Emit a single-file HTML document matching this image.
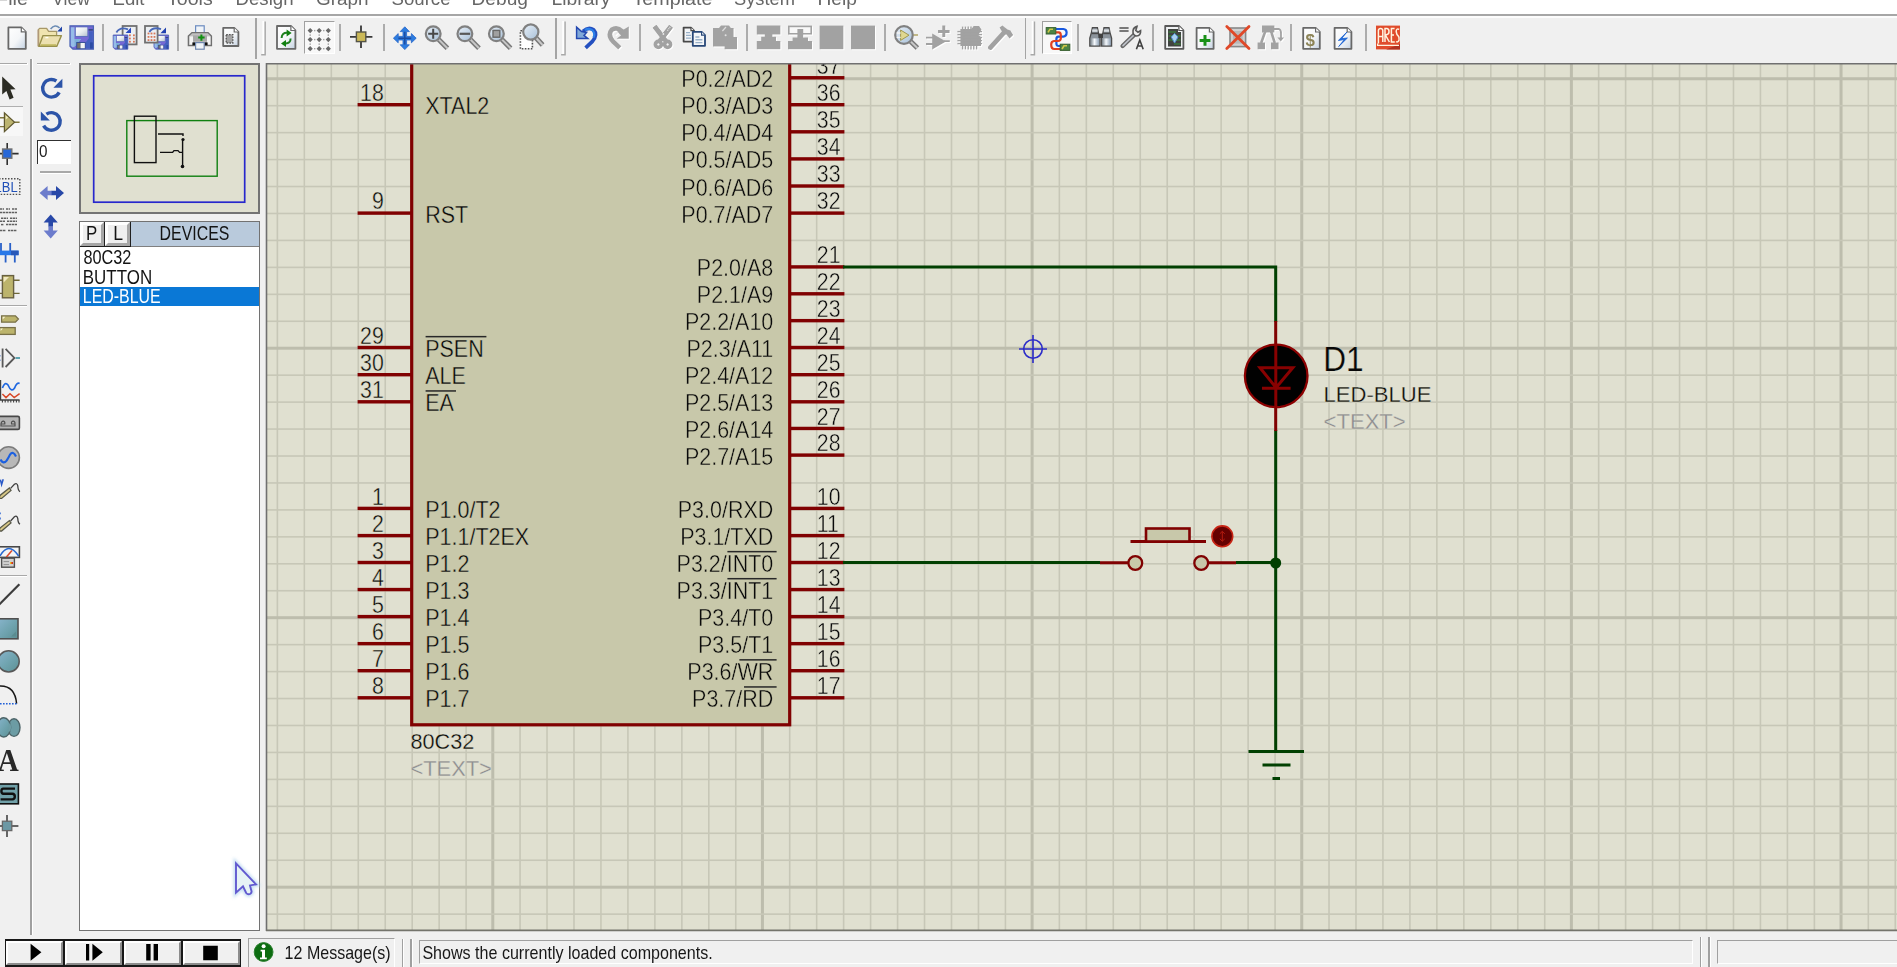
<!DOCTYPE html>
<html><head><meta charset="utf-8"><title>ISIS</title>
<style>
html,body{margin:0;padding:0;}
body{width:1897px;height:967px;overflow:hidden;background:#f0f0f0;position:relative;font-family:"Liberation Sans",sans-serif;}
.abs{position:absolute;}
</style></head><body>
<svg class="abs" style="left:0;top:0;opacity:0.999" width="1897" height="967" viewBox="0 0 1897 967" font-family="Liberation Sans, sans-serif"><defs><clipPath id="cc"><rect x="267" y="64" width="1630" height="866"/></clipPath></defs><rect x="267" y="64" width="1630" height="866" fill="#e0e0d0"/><g clip-path="url(#cc)"><g><rect x="276.57" y="64" width="1.6" height="866" fill="#c7c7b7"/><rect x="303.53" y="64" width="1.6" height="866" fill="#c7c7b7"/><rect x="330.50" y="64" width="1.6" height="866" fill="#c7c7b7"/><rect x="357.46" y="64" width="1.6" height="866" fill="#c7c7b7"/><rect x="384.43" y="64" width="1.6" height="866" fill="#c7c7b7"/><rect x="411.39" y="64" width="1.6" height="866" fill="#c7c7b7"/><rect x="438.36" y="64" width="1.6" height="866" fill="#c7c7b7"/><rect x="465.32" y="64" width="1.6" height="866" fill="#c7c7b7"/><rect x="491.29" y="64" width="3" height="866" fill="#bdbdad"/><rect x="519.26" y="64" width="1.6" height="866" fill="#c7c7b7"/><rect x="546.22" y="64" width="1.6" height="866" fill="#c7c7b7"/><rect x="573.19" y="64" width="1.6" height="866" fill="#c7c7b7"/><rect x="600.15" y="64" width="1.6" height="866" fill="#c7c7b7"/><rect x="627.11" y="64" width="1.6" height="866" fill="#c7c7b7"/><rect x="654.08" y="64" width="1.6" height="866" fill="#c7c7b7"/><rect x="681.05" y="64" width="1.6" height="866" fill="#c7c7b7"/><rect x="708.01" y="64" width="1.6" height="866" fill="#c7c7b7"/><rect x="734.97" y="64" width="1.6" height="866" fill="#c7c7b7"/><rect x="760.94" y="64" width="3" height="866" fill="#bdbdad"/><rect x="788.91" y="64" width="1.6" height="866" fill="#c7c7b7"/><rect x="815.87" y="64" width="1.6" height="866" fill="#c7c7b7"/><rect x="842.83" y="64" width="1.6" height="866" fill="#c7c7b7"/><rect x="869.80" y="64" width="1.6" height="866" fill="#c7c7b7"/><rect x="896.77" y="64" width="1.6" height="866" fill="#c7c7b7"/><rect x="923.73" y="64" width="1.6" height="866" fill="#c7c7b7"/><rect x="950.70" y="64" width="1.6" height="866" fill="#c7c7b7"/><rect x="977.66" y="64" width="1.6" height="866" fill="#c7c7b7"/><rect x="1004.62" y="64" width="1.6" height="866" fill="#c7c7b7"/><rect x="1030.59" y="64" width="3" height="866" fill="#bdbdad"/><rect x="1058.56" y="64" width="1.6" height="866" fill="#c7c7b7"/><rect x="1085.52" y="64" width="1.6" height="866" fill="#c7c7b7"/><rect x="1112.48" y="64" width="1.6" height="866" fill="#c7c7b7"/><rect x="1139.45" y="64" width="1.6" height="866" fill="#c7c7b7"/><rect x="1166.42" y="64" width="1.6" height="866" fill="#c7c7b7"/><rect x="1193.38" y="64" width="1.6" height="866" fill="#c7c7b7"/><rect x="1220.34" y="64" width="1.6" height="866" fill="#c7c7b7"/><rect x="1247.31" y="64" width="1.6" height="866" fill="#c7c7b7"/><rect x="1274.28" y="64" width="1.6" height="866" fill="#c7c7b7"/><rect x="1300.24" y="64" width="3" height="866" fill="#bdbdad"/><rect x="1328.21" y="64" width="1.6" height="866" fill="#c7c7b7"/><rect x="1355.17" y="64" width="1.6" height="866" fill="#c7c7b7"/><rect x="1382.13" y="64" width="1.6" height="866" fill="#c7c7b7"/><rect x="1409.10" y="64" width="1.6" height="866" fill="#c7c7b7"/><rect x="1436.06" y="64" width="1.6" height="866" fill="#c7c7b7"/><rect x="1463.03" y="64" width="1.6" height="866" fill="#c7c7b7"/><rect x="1490.00" y="64" width="1.6" height="866" fill="#c7c7b7"/><rect x="1516.96" y="64" width="1.6" height="866" fill="#c7c7b7"/><rect x="1543.92" y="64" width="1.6" height="866" fill="#c7c7b7"/><rect x="1569.89" y="64" width="3" height="866" fill="#bdbdad"/><rect x="1597.86" y="64" width="1.6" height="866" fill="#c7c7b7"/><rect x="1624.82" y="64" width="1.6" height="866" fill="#c7c7b7"/><rect x="1651.79" y="64" width="1.6" height="866" fill="#c7c7b7"/><rect x="1678.75" y="64" width="1.6" height="866" fill="#c7c7b7"/><rect x="1705.71" y="64" width="1.6" height="866" fill="#c7c7b7"/><rect x="1732.68" y="64" width="1.6" height="866" fill="#c7c7b7"/><rect x="1759.65" y="64" width="1.6" height="866" fill="#c7c7b7"/><rect x="1786.61" y="64" width="1.6" height="866" fill="#c7c7b7"/><rect x="1813.58" y="64" width="1.6" height="866" fill="#c7c7b7"/><rect x="1839.54" y="64" width="3" height="866" fill="#bdbdad"/><rect x="1867.50" y="64" width="1.6" height="866" fill="#c7c7b7"/><rect x="1894.47" y="64" width="1.6" height="866" fill="#c7c7b7"/><rect x="267" y="77.24" width="1630" height="3" fill="#bdbdad"/><rect x="267" y="104.89" width="1630" height="1.6" fill="#c7c7b7"/><rect x="267" y="131.84" width="1630" height="1.6" fill="#c7c7b7"/><rect x="267" y="158.78" width="1630" height="1.6" fill="#c7c7b7"/><rect x="267" y="185.73" width="1630" height="1.6" fill="#c7c7b7"/><rect x="267" y="212.68" width="1630" height="1.6" fill="#c7c7b7"/><rect x="267" y="239.63" width="1630" height="1.6" fill="#c7c7b7"/><rect x="267" y="266.58" width="1630" height="1.6" fill="#c7c7b7"/><rect x="267" y="293.52" width="1630" height="1.6" fill="#c7c7b7"/><rect x="267" y="320.47" width="1630" height="1.6" fill="#c7c7b7"/><rect x="267" y="346.72" width="1630" height="3" fill="#bdbdad"/><rect x="267" y="374.37" width="1630" height="1.6" fill="#c7c7b7"/><rect x="267" y="401.32" width="1630" height="1.6" fill="#c7c7b7"/><rect x="267" y="428.26" width="1630" height="1.6" fill="#c7c7b7"/><rect x="267" y="455.21" width="1630" height="1.6" fill="#c7c7b7"/><rect x="267" y="482.16" width="1630" height="1.6" fill="#c7c7b7"/><rect x="267" y="509.11" width="1630" height="1.6" fill="#c7c7b7"/><rect x="267" y="536.06" width="1630" height="1.6" fill="#c7c7b7"/><rect x="267" y="563.00" width="1630" height="1.6" fill="#c7c7b7"/><rect x="267" y="589.95" width="1630" height="1.6" fill="#c7c7b7"/><rect x="267" y="616.20" width="1630" height="3" fill="#bdbdad"/><rect x="267" y="643.85" width="1630" height="1.6" fill="#c7c7b7"/><rect x="267" y="670.80" width="1630" height="1.6" fill="#c7c7b7"/><rect x="267" y="697.74" width="1630" height="1.6" fill="#c7c7b7"/><rect x="267" y="724.69" width="1630" height="1.6" fill="#c7c7b7"/><rect x="267" y="751.64" width="1630" height="1.6" fill="#c7c7b7"/><rect x="267" y="778.59" width="1630" height="1.6" fill="#c7c7b7"/><rect x="267" y="805.54" width="1630" height="1.6" fill="#c7c7b7"/><rect x="267" y="832.48" width="1630" height="1.6" fill="#c7c7b7"/><rect x="267" y="859.43" width="1630" height="1.6" fill="#c7c7b7"/><rect x="267" y="885.68" width="1630" height="3" fill="#bdbdad"/><rect x="267" y="913.33" width="1630" height="1.6" fill="#c7c7b7"/></g>
<rect x="411.7" y="40" width="378" height="684.8" fill="#c8c8aa" stroke="#800000" stroke-width="3.2"/>
<rect x="357.6" y="103.00" width="54" height="3.4" fill="#800000"/>
<text transform="translate(383.8 100.8) scale(0.895 1)" font-size="23.8" text-anchor="end" fill="#0a0a0a" stroke="#e0e0d0" stroke-width="0.4">18</text>
<text transform="translate(425.2 114.2) scale(0.935 1)" font-size="23" text-anchor="start" fill="#0a0a0a" stroke="#c8c8aa" stroke-width="0.4">XTAL2</text>
<rect x="357.6" y="211.40" width="54" height="3.4" fill="#800000"/>
<text transform="translate(383.8 209.2) scale(0.895 1)" font-size="23.8" text-anchor="end" fill="#0a0a0a" stroke="#e0e0d0" stroke-width="0.4">9</text>
<text transform="translate(425.2 222.6) scale(0.935 1)" font-size="23" text-anchor="start" fill="#0a0a0a" stroke="#c8c8aa" stroke-width="0.4">RST</text>
<rect x="357.6" y="345.80" width="54" height="3.4" fill="#800000"/>
<text transform="translate(383.8 343.6) scale(0.895 1)" font-size="23.8" text-anchor="end" fill="#0a0a0a" stroke="#e0e0d0" stroke-width="0.4">29</text>
<text transform="translate(425.2 357.0) scale(0.935 1)" font-size="23" text-anchor="start" fill="#0a0a0a" stroke="#c8c8aa" stroke-width="0.4">PSEN</text>
<rect x="357.6" y="373.00" width="54" height="3.4" fill="#800000"/>
<text transform="translate(383.8 370.8) scale(0.895 1)" font-size="23.8" text-anchor="end" fill="#0a0a0a" stroke="#e0e0d0" stroke-width="0.4">30</text>
<text transform="translate(425.2 384.2) scale(0.935 1)" font-size="23" text-anchor="start" fill="#0a0a0a" stroke="#c8c8aa" stroke-width="0.4">ALE</text>
<rect x="357.6" y="400.10" width="54" height="3.4" fill="#800000"/>
<text transform="translate(383.8 397.9) scale(0.895 1)" font-size="23.8" text-anchor="end" fill="#0a0a0a" stroke="#e0e0d0" stroke-width="0.4">31</text>
<text transform="translate(425.2 411.3) scale(0.935 1)" font-size="23" text-anchor="start" fill="#0a0a0a" stroke="#c8c8aa" stroke-width="0.4">EA</text>
<rect x="357.6" y="506.70" width="54" height="3.4" fill="#800000"/>
<text transform="translate(383.8 504.5) scale(0.895 1)" font-size="23.8" text-anchor="end" fill="#0a0a0a" stroke="#e0e0d0" stroke-width="0.4">1</text>
<text transform="translate(425.2 517.9) scale(0.935 1)" font-size="23" text-anchor="start" fill="#0a0a0a" stroke="#c8c8aa" stroke-width="0.4">P1.0/T2</text>
<rect x="357.6" y="533.90" width="54" height="3.4" fill="#800000"/>
<text transform="translate(383.8 531.7) scale(0.895 1)" font-size="23.8" text-anchor="end" fill="#0a0a0a" stroke="#e0e0d0" stroke-width="0.4">2</text>
<text transform="translate(425.2 545.1) scale(0.935 1)" font-size="23" text-anchor="start" fill="#0a0a0a" stroke="#c8c8aa" stroke-width="0.4">P1.1/T2EX</text>
<rect x="357.6" y="560.80" width="54" height="3.4" fill="#800000"/>
<text transform="translate(383.8 558.6) scale(0.895 1)" font-size="23.8" text-anchor="end" fill="#0a0a0a" stroke="#e0e0d0" stroke-width="0.4">3</text>
<text transform="translate(425.2 572.0) scale(0.935 1)" font-size="23" text-anchor="start" fill="#0a0a0a" stroke="#c8c8aa" stroke-width="0.4">P1.2</text>
<rect x="357.6" y="587.85" width="54" height="3.4" fill="#800000"/>
<text transform="translate(383.8 585.65) scale(0.895 1)" font-size="23.8" text-anchor="end" fill="#0a0a0a" stroke="#e0e0d0" stroke-width="0.4">4</text>
<text transform="translate(425.2 599.05) scale(0.935 1)" font-size="23" text-anchor="start" fill="#0a0a0a" stroke="#c8c8aa" stroke-width="0.4">P1.3</text>
<rect x="357.6" y="614.90" width="54" height="3.4" fill="#800000"/>
<text transform="translate(383.8 612.7) scale(0.895 1)" font-size="23.8" text-anchor="end" fill="#0a0a0a" stroke="#e0e0d0" stroke-width="0.4">5</text>
<text transform="translate(425.2 626.1) scale(0.935 1)" font-size="23" text-anchor="start" fill="#0a0a0a" stroke="#c8c8aa" stroke-width="0.4">P1.4</text>
<rect x="357.6" y="641.95" width="54" height="3.4" fill="#800000"/>
<text transform="translate(383.8 639.75) scale(0.895 1)" font-size="23.8" text-anchor="end" fill="#0a0a0a" stroke="#e0e0d0" stroke-width="0.4">6</text>
<text transform="translate(425.2 653.15) scale(0.935 1)" font-size="23" text-anchor="start" fill="#0a0a0a" stroke="#c8c8aa" stroke-width="0.4">P1.5</text>
<rect x="357.6" y="669.00" width="54" height="3.4" fill="#800000"/>
<text transform="translate(383.8 666.8) scale(0.895 1)" font-size="23.8" text-anchor="end" fill="#0a0a0a" stroke="#e0e0d0" stroke-width="0.4">7</text>
<text transform="translate(425.2 680.2) scale(0.935 1)" font-size="23" text-anchor="start" fill="#0a0a0a" stroke="#c8c8aa" stroke-width="0.4">P1.6</text>
<rect x="357.6" y="696.10" width="54" height="3.4" fill="#800000"/>
<text transform="translate(383.8 693.9) scale(0.895 1)" font-size="23.8" text-anchor="end" fill="#0a0a0a" stroke="#e0e0d0" stroke-width="0.4">8</text>
<text transform="translate(425.2 707.3) scale(0.935 1)" font-size="23" text-anchor="start" fill="#0a0a0a" stroke="#c8c8aa" stroke-width="0.4">P1.7</text>
<rect x="789" y="49.09" width="55.4" height="3.4" fill="#800000"/>
<text transform="translate(816.8 46.89) scale(0.895 1)" font-size="23.8" text-anchor="start" fill="#0a0a0a" stroke="#e0e0d0" stroke-width="0.4">37</text>
<text transform="translate(773.3 60.29) scale(0.935 1)" font-size="23" text-anchor="end" fill="#0a0a0a" stroke="#c8c8aa" stroke-width="0.4">P0.1/AD1</text>
<rect x="789" y="76.05" width="55.4" height="3.4" fill="#800000"/>
<text transform="translate(816.8 73.85) scale(0.895 1)" font-size="23.8" text-anchor="start" fill="#0a0a0a" stroke="#e0e0d0" stroke-width="0.4">37</text>
<text transform="translate(773.3 87.25) scale(0.935 1)" font-size="23" text-anchor="end" fill="#0a0a0a" stroke="#c8c8aa" stroke-width="0.4">P0.2/AD2</text>
<rect x="789" y="103.00" width="55.4" height="3.4" fill="#800000"/>
<text transform="translate(816.8 100.8) scale(0.895 1)" font-size="23.8" text-anchor="start" fill="#0a0a0a" stroke="#e0e0d0" stroke-width="0.4">36</text>
<text transform="translate(773.3 114.2) scale(0.935 1)" font-size="23" text-anchor="end" fill="#0a0a0a" stroke="#c8c8aa" stroke-width="0.4">P0.3/AD3</text>
<rect x="789" y="130.10" width="55.4" height="3.4" fill="#800000"/>
<text transform="translate(816.8 127.9) scale(0.895 1)" font-size="23.8" text-anchor="start" fill="#0a0a0a" stroke="#e0e0d0" stroke-width="0.4">35</text>
<text transform="translate(773.3 141.3) scale(0.935 1)" font-size="23" text-anchor="end" fill="#0a0a0a" stroke="#c8c8aa" stroke-width="0.4">P0.4/AD4</text>
<rect x="789" y="157.20" width="55.4" height="3.4" fill="#800000"/>
<text transform="translate(816.8 155.0) scale(0.895 1)" font-size="23.8" text-anchor="start" fill="#0a0a0a" stroke="#e0e0d0" stroke-width="0.4">34</text>
<text transform="translate(773.3 168.4) scale(0.935 1)" font-size="23" text-anchor="end" fill="#0a0a0a" stroke="#c8c8aa" stroke-width="0.4">P0.5/AD5</text>
<rect x="789" y="184.30" width="55.4" height="3.4" fill="#800000"/>
<text transform="translate(816.8 182.1) scale(0.895 1)" font-size="23.8" text-anchor="start" fill="#0a0a0a" stroke="#e0e0d0" stroke-width="0.4">33</text>
<text transform="translate(773.3 195.5) scale(0.935 1)" font-size="23" text-anchor="end" fill="#0a0a0a" stroke="#c8c8aa" stroke-width="0.4">P0.6/AD6</text>
<rect x="789" y="211.40" width="55.4" height="3.4" fill="#800000"/>
<text transform="translate(816.8 209.2) scale(0.895 1)" font-size="23.8" text-anchor="start" fill="#0a0a0a" stroke="#e0e0d0" stroke-width="0.4">32</text>
<text transform="translate(773.3 222.6) scale(0.935 1)" font-size="23" text-anchor="end" fill="#0a0a0a" stroke="#c8c8aa" stroke-width="0.4">P0.7/AD7</text>
<rect x="789" y="265.20" width="55.4" height="3.4" fill="#800000"/>
<text transform="translate(816.8 263.0) scale(0.895 1)" font-size="23.8" text-anchor="start" fill="#0a0a0a" stroke="#e0e0d0" stroke-width="0.4">21</text>
<text transform="translate(773.3 276.4) scale(0.935 1)" font-size="23" text-anchor="end" fill="#0a0a0a" stroke="#c8c8aa" stroke-width="0.4">P2.0/A8</text>
<rect x="789" y="292.10" width="55.4" height="3.4" fill="#800000"/>
<text transform="translate(816.8 289.9) scale(0.895 1)" font-size="23.8" text-anchor="start" fill="#0a0a0a" stroke="#e0e0d0" stroke-width="0.4">22</text>
<text transform="translate(773.3 303.3) scale(0.935 1)" font-size="23" text-anchor="end" fill="#0a0a0a" stroke="#c8c8aa" stroke-width="0.4">P2.1/A9</text>
<rect x="789" y="318.95" width="55.4" height="3.4" fill="#800000"/>
<text transform="translate(816.8 316.75) scale(0.895 1)" font-size="23.8" text-anchor="start" fill="#0a0a0a" stroke="#e0e0d0" stroke-width="0.4">23</text>
<text transform="translate(773.3 330.15) scale(0.935 1)" font-size="23" text-anchor="end" fill="#0a0a0a" stroke="#c8c8aa" stroke-width="0.4">P2.2/A10</text>
<rect x="789" y="345.80" width="55.4" height="3.4" fill="#800000"/>
<text transform="translate(816.8 343.6) scale(0.895 1)" font-size="23.8" text-anchor="start" fill="#0a0a0a" stroke="#e0e0d0" stroke-width="0.4">24</text>
<text transform="translate(773.3 357.0) scale(0.935 1)" font-size="23" text-anchor="end" fill="#0a0a0a" stroke="#c8c8aa" stroke-width="0.4">P2.3/A11</text>
<rect x="789" y="373.00" width="55.4" height="3.4" fill="#800000"/>
<text transform="translate(816.8 370.8) scale(0.895 1)" font-size="23.8" text-anchor="start" fill="#0a0a0a" stroke="#e0e0d0" stroke-width="0.4">25</text>
<text transform="translate(773.3 384.2) scale(0.935 1)" font-size="23" text-anchor="end" fill="#0a0a0a" stroke="#c8c8aa" stroke-width="0.4">P2.4/A12</text>
<rect x="789" y="400.10" width="55.4" height="3.4" fill="#800000"/>
<text transform="translate(816.8 397.9) scale(0.895 1)" font-size="23.8" text-anchor="start" fill="#0a0a0a" stroke="#e0e0d0" stroke-width="0.4">26</text>
<text transform="translate(773.3 411.3) scale(0.935 1)" font-size="23" text-anchor="end" fill="#0a0a0a" stroke="#c8c8aa" stroke-width="0.4">P2.5/A13</text>
<rect x="789" y="426.75" width="55.4" height="3.4" fill="#800000"/>
<text transform="translate(816.8 424.55) scale(0.895 1)" font-size="23.8" text-anchor="start" fill="#0a0a0a" stroke="#e0e0d0" stroke-width="0.4">27</text>
<text transform="translate(773.3 437.95) scale(0.935 1)" font-size="23" text-anchor="end" fill="#0a0a0a" stroke="#c8c8aa" stroke-width="0.4">P2.6/A14</text>
<rect x="789" y="453.40" width="55.4" height="3.4" fill="#800000"/>
<text transform="translate(816.8 451.2) scale(0.895 1)" font-size="23.8" text-anchor="start" fill="#0a0a0a" stroke="#e0e0d0" stroke-width="0.4">28</text>
<text transform="translate(773.3 464.6) scale(0.935 1)" font-size="23" text-anchor="end" fill="#0a0a0a" stroke="#c8c8aa" stroke-width="0.4">P2.7/A15</text>
<rect x="789" y="506.70" width="55.4" height="3.4" fill="#800000"/>
<text transform="translate(816.8 504.5) scale(0.895 1)" font-size="23.8" text-anchor="start" fill="#0a0a0a" stroke="#e0e0d0" stroke-width="0.4">10</text>
<text transform="translate(773.3 517.9) scale(0.935 1)" font-size="23" text-anchor="end" fill="#0a0a0a" stroke="#c8c8aa" stroke-width="0.4">P3.0/RXD</text>
<rect x="789" y="533.90" width="55.4" height="3.4" fill="#800000"/>
<text transform="translate(816.8 531.7) scale(0.895 1)" font-size="23.8" text-anchor="start" fill="#0a0a0a" stroke="#e0e0d0" stroke-width="0.4">11</text>
<text transform="translate(773.3 545.1) scale(0.935 1)" font-size="23" text-anchor="end" fill="#0a0a0a" stroke="#c8c8aa" stroke-width="0.4">P3.1/TXD</text>
<rect x="789" y="560.80" width="55.4" height="3.4" fill="#800000"/>
<text transform="translate(816.8 558.6) scale(0.895 1)" font-size="23.8" text-anchor="start" fill="#0a0a0a" stroke="#e0e0d0" stroke-width="0.4">12</text>
<text transform="translate(773.3 572.0) scale(0.935 1)" font-size="23" text-anchor="end" fill="#0a0a0a" stroke="#c8c8aa" stroke-width="0.4">P3.2/INT0</text>
<rect x="789" y="587.85" width="55.4" height="3.4" fill="#800000"/>
<text transform="translate(816.8 585.65) scale(0.895 1)" font-size="23.8" text-anchor="start" fill="#0a0a0a" stroke="#e0e0d0" stroke-width="0.4">13</text>
<text transform="translate(773.3 599.05) scale(0.935 1)" font-size="23" text-anchor="end" fill="#0a0a0a" stroke="#c8c8aa" stroke-width="0.4">P3.3/INT1</text>
<rect x="789" y="614.90" width="55.4" height="3.4" fill="#800000"/>
<text transform="translate(816.8 612.7) scale(0.895 1)" font-size="23.8" text-anchor="start" fill="#0a0a0a" stroke="#e0e0d0" stroke-width="0.4">14</text>
<text transform="translate(773.3 626.1) scale(0.935 1)" font-size="23" text-anchor="end" fill="#0a0a0a" stroke="#c8c8aa" stroke-width="0.4">P3.4/T0</text>
<rect x="789" y="641.95" width="55.4" height="3.4" fill="#800000"/>
<text transform="translate(816.8 639.75) scale(0.895 1)" font-size="23.8" text-anchor="start" fill="#0a0a0a" stroke="#e0e0d0" stroke-width="0.4">15</text>
<text transform="translate(773.3 653.15) scale(0.935 1)" font-size="23" text-anchor="end" fill="#0a0a0a" stroke="#c8c8aa" stroke-width="0.4">P3.5/T1</text>
<rect x="789" y="669.00" width="55.4" height="3.4" fill="#800000"/>
<text transform="translate(816.8 666.8) scale(0.895 1)" font-size="23.8" text-anchor="start" fill="#0a0a0a" stroke="#e0e0d0" stroke-width="0.4">16</text>
<text transform="translate(773.3 680.2) scale(0.935 1)" font-size="23" text-anchor="end" fill="#0a0a0a" stroke="#c8c8aa" stroke-width="0.4">P3.6/WR</text>
<rect x="789" y="696.10" width="55.4" height="3.4" fill="#800000"/>
<text transform="translate(816.8 693.9) scale(0.895 1)" font-size="23.8" text-anchor="start" fill="#0a0a0a" stroke="#e0e0d0" stroke-width="0.4">17</text>
<text transform="translate(773.3 707.3) scale(0.935 1)" font-size="23" text-anchor="end" fill="#0a0a0a" stroke="#c8c8aa" stroke-width="0.4">P3.7/RD</text>
<rect x="425.6" y="335.90" width="60.799999999999955" height="1.5" fill="#282828"/>
<rect x="425.6" y="390.20" width="30.399999999999977" height="1.5" fill="#282828"/>
<rect x="727.4" y="550.90" width="49.200000000000045" height="1.5" fill="#282828"/>
<rect x="727.4" y="577.95" width="49.200000000000045" height="1.5" fill="#282828"/>
<rect x="739.4" y="659.10" width="37.200000000000045" height="1.5" fill="#282828"/>
<rect x="744" y="686.20" width="32.60000000000002" height="1.5" fill="#282828"/>
<text transform="translate(410.4 749) scale(0.985 1)" font-size="22" text-anchor="start" fill="#0a0a0a" stroke="#e0e0d0" stroke-width="0.3">80C32</text>
<text transform="translate(410.4 776) scale(0.995 1)" font-size="22" text-anchor="start" fill="#8c8c90" stroke="#e0e0d0" stroke-width="0.3">&lt;TEXT&gt;</text>
<path d="M843 266.9 H1275.7 V322 M1275.7 430 V751.5 M843 562.6 H1100 M1236 562.6 H1275" stroke="#004000" stroke-width="3" fill="none"/>
<path d="M1275.7 321 V431" stroke="#800000" stroke-width="3"/>
<circle cx="1276.2" cy="375.9" r="31.3" fill="#000" stroke="#8c0000" stroke-width="2.3"/>
<path d="M1275.8 345 V407 M1260 367.8 H1292.8 L1276 387.6 Z M1262 388.2 H1290.6" stroke="#880000" stroke-width="3" fill="none"/>
<text transform="translate(1323.2 370.6) scale(0.925 1)" font-size="34.2" text-anchor="start" fill="#080808" stroke="#e0e0d0" stroke-width="0.25">D1</text>
<text transform="translate(1323.6 402.2) scale(0.985 1)" font-size="22.4" text-anchor="start" fill="#0a0a0a" stroke="#e0e0d0" stroke-width="0.3">LED-BLUE</text>
<text transform="translate(1323.6 429.2) scale(0.985 1)" font-size="22.4" text-anchor="start" fill="#8c8c90" stroke="#e0e0d0" stroke-width="0.3">&lt;TEXT&gt;</text>
<path d="M1100 562.7 H1128 M1208 562.7 H1236 M1130.5 541.5 H1206" stroke="#800000" stroke-width="3"/>
<rect x="1146" y="528.5" width="43.5" height="13" fill="#c8c8aa" stroke="#800000" stroke-width="2.6"/>
<circle cx="1135.3" cy="563" r="6.9" fill="#c8c8aa" stroke="#800000" stroke-width="2.3"/>
<circle cx="1201.2" cy="563" r="6.9" fill="#c8c8aa" stroke="#800000" stroke-width="2.3"/>
<circle cx="1222.3" cy="536.3" r="10.4" fill="#660000" stroke="#c82414" stroke-width="1.6"/><path d="M1222.3 531.4 V541.2 M1219.8 533.8 L1222.3 531.4 L1224.8 533.8 M1219.8 538.8 L1222.3 541.2 L1224.8 538.8" stroke="#b41c10" stroke-width="1" fill="none"/>
<circle cx="1275.7" cy="563" r="5.5" fill="#004000"/>
<path d="M1248.5 751.5 H1304 M1262.5 765 H1290.5 M1272.5 778.5 H1280" stroke="#004000" stroke-width="3"/>
<g stroke="#2c2cc8" stroke-width="1.6" fill="none"><circle cx="1033" cy="349" r="9.3"/><path d="M1019 349 H1047 M1033 335 V363"/></g></g><path d="M266.5 931 V63.7 H1897" stroke="#707070" stroke-width="1.6" fill="none"/><path d="M266 930.4 H1897" stroke="#74746c" stroke-width="1.8" fill="none"/></svg>
<div class="abs" style="left:0px;top:0px;width:1897px;height:14px;background:#fff"></div>
<div class="abs" style="left:0px;top:14.4px;width:1897px;height:2px;background:#a6a6a6"></div>
<div class="abs" style="left:0px;top:16.4px;width:1897px;height:1.5px;background:#fcfcfc"></div>
<div class="abs" style="left:102px;top:24px;width:2px;height:27px;background:#acacac"></div>
<div class="abs" style="left:177px;top:24px;width:2px;height:27px;background:#acacac"></div>
<div class="abs" style="left:339px;top:24px;width:2px;height:27px;background:#acacac"></div>
<div class="abs" style="left:383px;top:24px;width:2px;height:27px;background:#acacac"></div>
<div class="abs" style="left:639px;top:24px;width:2px;height:27px;background:#acacac"></div>
<div class="abs" style="left:746px;top:24px;width:2px;height:27px;background:#acacac"></div>
<div class="abs" style="left:884px;top:24px;width:2px;height:27px;background:#acacac"></div>
<div class="abs" style="left:1077px;top:24px;width:2px;height:27px;background:#acacac"></div>
<div class="abs" style="left:1152px;top:24px;width:2px;height:27px;background:#acacac"></div>
<div class="abs" style="left:1290px;top:24px;width:2px;height:27px;background:#acacac"></div>
<div class="abs" style="left:1365px;top:24px;width:2px;height:27px;background:#acacac"></div>
<div class="abs" style="left:255.39999999999998px;top:18px;width:1.6px;height:40.5px;background:#a4a4a4"></div>
<div class="abs" style="left:555.3000000000001px;top:18px;width:1.6px;height:40.5px;background:#a4a4a4"></div>
<div class="abs" style="left:1024.7px;top:18px;width:1.6px;height:40.5px;background:#a4a4a4"></div>
<div class="abs" style="left:303.5px;top:21px;width:31.0px;height:32.5px;background:#f8f8f8;border-top:1.5px solid #a0a0a0;border-left:1.5px solid #a0a0a0;border-right:1.5px solid #fff;border-bottom:1.5px solid #fff;box-sizing:border-box"></div>
<div class="abs" style="left:1041.5px;top:21px;width:30.5px;height:32.5px;background:#f8f8f8;border-top:1.5px solid #a0a0a0;border-left:1.5px solid #a0a0a0;border-right:1.5px solid #fff;border-bottom:1.5px solid #fff;box-sizing:border-box"></div>
<div class="abs" style="left:30.4px;top:58.5px;width:1.5px;height:876px;background:#a0a0a0"></div>
<div class="abs" style="left:31.9px;top:58.5px;width:1.3px;height:876px;background:#fff"></div>
<div class="abs" style="left:0px;top:62.8px;width:27px;height:1.5px;background:#a8a8a8"></div>
<div class="abs" style="left:0px;top:64.3px;width:28px;height:1.2px;background:#fff"></div>
<div class="abs" style="left:27px;top:62.8px;width:1.2px;height:2.6px;background:#fff"></div>
<div class="abs" style="left:36.5px;top:62.8px;width:33.5px;height:1.5px;background:#a8a8a8"></div>
<div class="abs" style="left:36.5px;top:64.3px;width:34.5px;height:1.2px;background:#fff"></div>
<div class="abs" style="left:70px;top:62.8px;width:1.2px;height:2.6px;background:#fff"></div>
<div class="abs" style="left:0px;top:304.7px;width:27px;height:1.5px;background:#a8a8a8"></div>
<div class="abs" style="left:0px;top:306.2px;width:27px;height:1.2px;background:#fff"></div>
<div class="abs" style="left:0px;top:574.7px;width:27px;height:1.5px;background:#a8a8a8"></div>
<div class="abs" style="left:0px;top:576.2px;width:27px;height:1.2px;background:#fff"></div>
<div class="abs" style="left:39.5px;top:171px;width:31.5px;height:1.5px;background:#a8a8a8"></div>
<div class="abs" style="left:39.5px;top:172.5px;width:31.5px;height:1.2px;background:#fff"></div>
<div class="abs" style="left:0px;top:105.5px;width:23.2px;height:30.5px;background:#f7f7f7;border-top:1.4px solid #b0b0b0;box-sizing:border-box"></div>
<div class="abs" style="left:36.6px;top:139.8px;width:34.5px;height:23.8px;background:#fff;border-top:1.7px solid #303030;border-left:1.7px solid #303030;box-sizing:border-box"></div>
<div class="abs" style="left:79px;top:63px;width:181px;height:151px;background:#e0e0d0;border:2px solid #747474;box-sizing:border-box"></div>
<div class="abs" style="left:79px;top:221px;width:181px;height:710px;background:#fff;border:1.8px solid #727272;box-sizing:border-box"></div>
<div class="abs" style="left:80.5px;top:222.2px;width:178px;height:24.4px;background:#b9cadc"></div>
<div class="abs" style="left:80.5px;top:246.2px;width:178px;height:1.2px;background:#808080"></div>
<div class="abs" style="left:80px;top:222px;width:24px;height:24px;background:#efefef;border-top:3px solid #fff;border-left:3px solid #fff;border-right:3px solid #a6a6a6;border-bottom:3px solid #a6a6a6;box-sizing:border-box"></div>
<div class="abs" style="left:105.2px;top:222px;width:24.60000000000001px;height:24px;background:#efefef;border-top:3px solid #fff;border-left:3px solid #fff;border-right:3px solid #a6a6a6;border-bottom:3px solid #a6a6a6;box-sizing:border-box"></div>
<div class="abs" style="left:104px;top:222px;width:1.2px;height:24.4px;background:#202020"></div>
<div class="abs" style="left:129.8px;top:222px;width:1.3px;height:24.4px;background:#202020"></div>
<div class="abs" style="left:80px;top:245.9px;width:51px;height:1.3px;background:#202020"></div>
<div class="abs" style="left:80px;top:287px;width:178.8px;height:18.7px;background:#0a78d6"></div>
<div class="abs" style="left:4.6px;top:938.6px;width:236.4px;height:30px;background:#181818"></div>
<div class="abs" style="left:6.4px;top:940.6px;width:57px;height:24.6px;background:#f0f0f0;border-top:2px solid #fff;border-left:2px solid #fff;border-right:2.4px solid #8c8c8c;border-bottom:2.4px solid #8c8c8c;box-sizing:border-box"></div>
<div class="abs" style="left:65.10000000000001px;top:940.6px;width:57px;height:24.6px;background:#f0f0f0;border-top:2px solid #fff;border-left:2px solid #fff;border-right:2.4px solid #8c8c8c;border-bottom:2.4px solid #8c8c8c;box-sizing:border-box"></div>
<div class="abs" style="left:123.80000000000001px;top:940.6px;width:57px;height:24.6px;background:#f0f0f0;border-top:2px solid #fff;border-left:2px solid #fff;border-right:2.4px solid #8c8c8c;border-bottom:2.4px solid #8c8c8c;box-sizing:border-box"></div>
<div class="abs" style="left:182.50000000000003px;top:940.6px;width:57px;height:24.6px;background:#f0f0f0;border-top:2px solid #fff;border-left:2px solid #fff;border-right:2.4px solid #8c8c8c;border-bottom:2.4px solid #8c8c8c;box-sizing:border-box"></div>
<div class="abs" style="left:248.4px;top:938.4px;width:146.5px;height:30px;border-top:1.5px solid #a0a0a0;border-left:1.5px solid #a0a0a0;border-right:1.5px solid #fff;box-sizing:border-box"></div>
<div class="abs" style="left:401.8px;top:939px;width:1.5px;height:28px;background:#a0a0a0"></div>
<div class="abs" style="left:403.3px;top:939px;width:1.2px;height:28px;background:#fff"></div>
<div class="abs" style="left:410.2px;top:939px;width:1.5px;height:28px;background:#a0a0a0"></div>
<div class="abs" style="left:411.7px;top:939px;width:1.2px;height:28px;background:#fff"></div>
<div class="abs" style="left:418.5px;top:940.4px;width:1274.5px;height:23.4px;border-top:1.5px solid #a0a0a0;border-left:1.5px solid #a0a0a0;border-right:1.5px solid #fff;border-bottom:1.5px solid #fff;box-sizing:border-box"></div>
<div class="abs" style="left:1699.6000000000001px;top:937px;width:1.5px;height:30px;background:#a0a0a0"></div>
<div class="abs" style="left:1701.1000000000001px;top:937px;width:1.2px;height:30px;background:#fff"></div>
<div class="abs" style="left:1708.0px;top:937px;width:1.5px;height:30px;background:#a0a0a0"></div>
<div class="abs" style="left:1709.5px;top:937px;width:1.2px;height:30px;background:#fff"></div>
<div class="abs" style="left:1716.5px;top:940.4px;width:190px;height:23.4px;border-top:1.5px solid #a0a0a0;border-left:1.5px solid #a0a0a0;border-bottom:1.5px solid #fff;box-sizing:border-box"></div>
<svg class="abs" style="left:0;top:0;opacity:0.999" width="1897" height="967" viewBox="0 0 1897 967" font-family="Liberation Sans, sans-serif">
<text x="-4" y="5.2" font-size="18.5" fill="#666666" textLength="32" lengthAdjust="spacingAndGlyphs">File</text>
<text x="52" y="5.2" font-size="18.5" fill="#666666" textLength="38" lengthAdjust="spacingAndGlyphs">View</text>
<text x="112.5" y="5.2" font-size="18.5" fill="#666666" textLength="32.0" lengthAdjust="spacingAndGlyphs">Edit</text>
<text x="167" y="5.2" font-size="18.5" fill="#666666" textLength="45.69999999999999" lengthAdjust="spacingAndGlyphs">Tools</text>
<text x="235.5" y="5.2" font-size="18.5" fill="#666666" textLength="58.0" lengthAdjust="spacingAndGlyphs">Design</text>
<text x="316" y="5.2" font-size="18.5" fill="#666666" textLength="52.5" lengthAdjust="spacingAndGlyphs">Graph</text>
<text x="391.5" y="5.2" font-size="18.5" fill="#666666" textLength="59.0" lengthAdjust="spacingAndGlyphs">Source</text>
<text x="471.5" y="5.2" font-size="18.5" fill="#666666" textLength="56.5" lengthAdjust="spacingAndGlyphs">Debug</text>
<text x="551.5" y="5.2" font-size="18.5" fill="#666666" textLength="59.0" lengthAdjust="spacingAndGlyphs">Library</text>
<text x="632.5" y="5.2" font-size="18.5" fill="#666666" textLength="80.0" lengthAdjust="spacingAndGlyphs">Template</text>
<text x="734" y="5.2" font-size="18.5" fill="#666666" textLength="61" lengthAdjust="spacingAndGlyphs">System</text>
<text x="817.5" y="5.2" font-size="18.5" fill="#666666" textLength="39.5" lengthAdjust="spacingAndGlyphs">Help</text>
<path d="M263.2 21 V54.4" stroke="#fff" stroke-width="1.6"/><path d="M265.2 21.5 V54.8 H261.2" stroke="#a8a8a8" stroke-width="1.4" fill="none"/>
<path d="M563.1 21 V54.4" stroke="#fff" stroke-width="1.6"/><path d="M565.1 21.5 V54.8 H561.1" stroke="#a8a8a8" stroke-width="1.4" fill="none"/>
<path d="M1032.5 21 V54.4" stroke="#fff" stroke-width="1.6"/><path d="M1034.5 21.5 V54.8 H1030.5" stroke="#a8a8a8" stroke-width="1.4" fill="none"/>
<text x="39" y="157" font-size="17" fill="#202020" textLength="8.5" lengthAdjust="spacingAndGlyphs">0</text>
<rect x="93.7" y="75.8" width="151" height="126.4" fill="none" stroke="#2828cc" stroke-width="1.7"/>
<rect x="126.8" y="120.6" width="90.4" height="55.6" fill="none" stroke="#108010" stroke-width="1.4"/>
<rect x="134.4" y="116.2" width="21.6" height="46.4" fill="none" stroke="#101010" stroke-width="1.4"/>
<path d="M158 134 H183 V136 M182.6 139 V167.5 M160 152.4 H172.6 L174 150.6 H178 L179.6 152.4 H182.6" fill="none" stroke="#101010" stroke-width="1.4"/>
<circle cx="183" cy="139.5" r="1.6" fill="#101010"/><circle cx="182.5" cy="166.5" r="1.8" fill="#101010"/>
<text transform="translate(86 240.1) scale(0.86 1)" font-size="19.6" fill="#141414">P</text>
<text transform="translate(113.2 240.1) scale(0.9 1)" font-size="19.6" fill="#141414">L</text>
<text transform="translate(159.6 240.1) scale(0.82 1)" font-size="19.4" fill="#141414">DEVICES</text>
<text transform="translate(83.4 264.1) scale(0.832 1)" font-size="19.6" fill="#141414">80C32</text>
<text transform="translate(82.8 283.5) scale(0.874 1)" font-size="19.4" fill="#141414">BUTTON</text>
<text transform="translate(82.8 302.7) scale(0.82 1)" font-size="19.4" fill="#ffffff">LED-BLUE</text>
<path d="M30.6 943.8 V960.8 L41.4 952.3 Z M86 944 h3.2 v16.6 h-3.2 Z M92.4 943.8 V960.8 L102.8 952.3 Z M146.2 944 h4.4 v16.6 h-4.4 Z M153.6 944 h4.4 v16.6 h-4.4 Z M203.2 945.8 h14.6 v14.4 h-14.6 Z" fill="#000"/>
<circle cx="263.6" cy="952" r="9.4" fill="#0c6c10" stroke="#2c8030" stroke-width="1"/><circle cx="263.6" cy="946.2" r="2" fill="#fff"/><path d="M260.6 949.8 h4.4 v7.6 h1.8 v1.8 h-6.8 v-1.8 h2 v-5.8 h-1.4 Z" fill="#fff"/>
<text transform="translate(284.6 958.8) scale(0.853 1)" font-size="18.8" fill="#181818">12 Message(s)</text>
<text transform="translate(422.4 958.8) scale(0.855 1)" font-size="18.8" fill="#181818">Shows the currently loaded components.</text>
<defs><linearGradient id="gdoc" x1="0" y1="0" x2="1" y2="1"><stop offset="0" stop-color="#ffffff"/><stop offset="0.55" stop-color="#f4f6f8"/><stop offset="1" stop-color="#c4d2e2"/></linearGradient><linearGradient id="glens" x1="0" y1="0" x2="1" y2="1"><stop offset="0" stop-color="#e8f0f8"/><stop offset="1" stop-color="#a8c0d8"/></linearGradient><linearGradient id="gteal" x1="0" y1="0" x2="1" y2="1"><stop offset="0" stop-color="#88b4cc"/><stop offset="0.5" stop-color="#70a4b0"/><stop offset="1" stop-color="#5c9094"/></linearGradient><linearGradient id="gflop" x1="0" y1="0" x2="1" y2="1"><stop offset="0" stop-color="#5078d0"/><stop offset="0.5" stop-color="#6868d0"/><stop offset="1" stop-color="#3858b0"/></linearGradient><linearGradient id="glab" x1="0" y1="0" x2="1" y2="1"><stop offset="0" stop-color="#ffffff"/><stop offset="0.5" stop-color="#e8ecf0"/><stop offset="1" stop-color="#b8c4d0"/></linearGradient></defs>
<path d="M8.4 27.4 H21.3 L25.8 31.9 V48.8 H8.4 Z" fill="url(#gdoc)" stroke="#686868" stroke-width="1.8" stroke-linejoin="round"/><path d="M21.3 27.4 V31.9 H25.8" fill="#fff" stroke="#686868" stroke-width="1.2"/>
<path d="M38.4 46.2 V29.6 L39.6 28.4 H46.6 L48.6 31.4 H56.6 V46.2 Z" fill="#f0e4b0" stroke="#a89868" stroke-width="1.3" stroke-linejoin="round"/><path d="M38.4 46.2 V29.6" stroke="#b09878" stroke-width="1.6"/><path d="M39 46.2 L43 35.6 H61.4 L56.8 46.2 Z" fill="#ece0b0" stroke="#98904c" stroke-width="1.4" stroke-linejoin="round"/><path d="M45.4 37.6 H48.4" stroke="#fffff4" stroke-width="1.4"/><path d="M41 45 H56" stroke="#b8b050" stroke-width="1.3"/><path d="M50.6 29 Q55 23.6 59.6 28" fill="none" stroke="#6c8cb4" stroke-width="1.6"/><path d="M62 26.6 V31.4 H57.2 Z" fill="#2044a8"/>
<path d="M70.0 25.8 H93.4 V49.2 H72.92 L70.0 46.28 Z" fill="#7468d4" stroke="#4c64b4" stroke-width="1.27"/><path d="M88.72 31.16 H92.81 V48.62 H85.6 V42.38 L88.72 38.48 Z" fill="#4460c0"/><path d="M89.99 42.38 H92.81 V48.62 H89.99 Z" fill="#2c4ca4"/><path d="M70.78 27.26 H74.48 V38.96 H81.12 L74.48 46.86 L72.53 47.25 L70.78 45.69 Z" fill="#96bce8"/><path d="M74.48 38.96 H81.12 L74.48 46.86 Z" fill="#7cb0d8"/><rect x="75.07" y="26.78" width="12.87" height="10.14" fill="#5c70bc"/><rect x="75.85" y="27.36" width="11.51" height="8.58" fill="url(#glab)"/><rect x="88.53" y="29.12" width="4.29" height="1.56" fill="#30487c"/><rect x="76.24" y="41.98" width="9.36" height="6.83" fill="#344c94"/><rect x="77.22" y="42.96" width="3.32" height="5.27" fill="#74746c"/><rect x="80.53" y="42.96" width="4.29" height="5.27" fill="#f4f4f4"/>
<rect x="122.6" y="26" width="14" height="18.4" fill="#eceff2" stroke="#707070" stroke-width="1.8"/>
<rect x="129" y="34.4" width="1.8" height="1.8" fill="#d87858"/><rect x="129" y="37.6" width="1.8" height="1.8" fill="#d87858"/><rect x="129" y="40.8" width="1.8" height="1.8" fill="#d87858"/><rect x="133" y="34.4" width="1.8" height="1.8" fill="#d87858"/><rect x="133" y="37.6" width="1.8" height="1.8" fill="#d87858"/><rect x="133" y="40.8" width="1.8" height="1.8" fill="#d87858"/>
<path d="M113.2 35.0 H127.8 V49.2 H115.03 L113.2 47.43 Z" fill="#7468d4" stroke="#4c64b4" stroke-width="0.87"/><path d="M124.88 38.25 H127.44 V48.84 H122.93 V45.06 L124.88 42.69 Z" fill="#4460c0"/><path d="M125.67 45.06 H127.44 V48.84 H125.67 Z" fill="#2c4ca4"/><path d="M113.69 35.89 H116.0 V42.99 H120.14 L116.0 47.78 L114.78 48.02 L113.69 47.07 Z" fill="#96bce8"/><path d="M116.0 42.99 H120.14 L116.0 47.78 Z" fill="#7cb0d8"/><rect x="116.36" y="35.59" width="8.03" height="6.16" fill="#5c70bc"/><rect x="116.85" y="35.95" width="7.18" height="5.20" fill="url(#glab)"/><rect x="124.76" y="37.01" width="2.68" height="0.95" fill="#30487c"/><rect x="117.09" y="44.82" width="5.84" height="4.14" fill="#344c94"/><rect x="117.7" y="45.41" width="2.07" height="3.20" fill="#74746c"/><rect x="119.77" y="45.41" width="2.68" height="3.20" fill="#f4f4f4"/>
<path d="M116.4 32.5 Q120 26.5 128 29.4" fill="none" stroke="#4868b8" stroke-width="1.8"/><path d="M131 27.4 V33 H125.6 Z" fill="#2848c0"/>
<path d="M154.0 35.0 H168.6 V49.2 H155.82 L154.0 47.43 Z" fill="#7468d4" stroke="#4c64b4" stroke-width="0.87"/><path d="M165.68 38.25 H168.23 V48.84 H163.73 V45.06 L165.68 42.69 Z" fill="#4460c0"/><path d="M166.47 45.06 H168.23 V48.84 H166.47 Z" fill="#2c4ca4"/><path d="M154.49 35.89 H156.8 V42.99 H160.94 L156.8 47.78 L155.58 48.02 L154.49 47.07 Z" fill="#96bce8"/><path d="M156.8 42.99 H160.94 L156.8 47.78 Z" fill="#7cb0d8"/><rect x="157.16" y="35.59" width="8.03" height="6.16" fill="#5c70bc"/><rect x="157.65" y="35.95" width="7.18" height="5.20" fill="url(#glab)"/><rect x="165.56" y="37.01" width="2.68" height="0.95" fill="#30487c"/><rect x="157.89" y="44.82" width="5.84" height="4.14" fill="#344c94"/><rect x="158.5" y="45.41" width="2.07" height="3.20" fill="#74746c"/><rect x="160.57" y="45.41" width="2.68" height="3.20" fill="#f4f4f4"/>
<rect x="145" y="26" width="12.6" height="16.6" fill="#eceff2" stroke="#707070" stroke-width="1.8"/>
<rect x="147.6" y="32.6" width="1.8" height="1.8" fill="#d87858"/><rect x="147.6" y="36" width="1.8" height="1.8" fill="#d87858"/><rect x="147.6" y="39.2" width="1.8" height="1.8" fill="#d87858"/><rect x="150.6" y="32.6" width="1.8" height="1.8" fill="#d87858"/><rect x="150.6" y="36" width="1.8" height="1.8" fill="#d87858"/><rect x="150.6" y="39.2" width="1.8" height="1.8" fill="#d87858"/><rect x="153.6" y="32.6" width="1.8" height="1.8" fill="#d87858"/><rect x="153.6" y="36" width="1.8" height="1.8" fill="#d87858"/><rect x="153.6" y="39.2" width="1.8" height="1.8" fill="#d87858"/>
<path d="M149.4 32 Q153 26.4 161 29.2" fill="none" stroke="#4868b8" stroke-width="1.8"/><path d="M166 27.6 V33.2 H160.4 Z" fill="#2040b0"/>
<rect x="195.6" y="25.8" width="8.6" height="9" fill="#f0f4f8" stroke="#6c8cc0" stroke-width="1.2"/><path d="M192 32.6 H208 L211.4 36 V45.6 H188.4 V36 Z" fill="#c0c0c0" stroke="#707070" stroke-width="1.4"/><rect x="189.6" y="36.4" width="3.4" height="8" fill="#f4f4f4"/><rect x="207" y="36.4" width="3.4" height="8" fill="#f4f4f4"/><rect x="193" y="35.4" width="14" height="6" fill="#a8a8a8"/><path d="M202.4 34.4 v2.2 h2.2 v2 h-2.2 v2.2 h-2 v-2.2 h-2.2 v-2 h2.2 v-2.2 Z" fill="#109010"/><rect x="192.4" y="42.4" width="3.2" height="2.8" fill="#101010"/><rect x="204.4" y="42.4" width="3.2" height="2.8" fill="#101010"/><rect x="195.6" y="42.6" width="8.6" height="6.6" fill="#f0f4f8" stroke="#7088b0" stroke-width="1.2"/>
<path d="M223.2 27.8 H234.20000000000002 L238.4 32.0 V46 H223.2 Z" fill="url(#gdoc)" stroke="#686868" stroke-width="1.8" stroke-linejoin="round"/><path d="M234.20000000000002 27.8 V32.0 H238.4" fill="#fff" stroke="#686868" stroke-width="1.2"/>
<rect x="226.2" y="34.6" width="6.6" height="8.4" fill="#a4a4a4" stroke="#585858" stroke-width="1.4" stroke-dasharray="1.6 1.2"/>
<path d="M277 26 H290.9 L295.4 30.5 V48.8 H277 Z" fill="url(#gdoc)" stroke="#686868" stroke-width="1.8" stroke-linejoin="round"/><path d="M290.9 26 V30.5 H295.4" fill="#fff" stroke="#686868" stroke-width="1.2"/>
<path d="M281.6 38 Q281.8 32.4 287.4 32.8" fill="none" stroke="#208020" stroke-width="2"/><path d="M286.6 29.4 L291.6 33 L286.6 36.4 Z" fill="#108010"/><path d="M290.6 38.4 Q290.6 43.8 285.2 43.4" fill="none" stroke="#208020" stroke-width="2"/><path d="M286 40 L281 43.4 L286 47 Z" fill="#108010"/>
<path d="M310.2 28.0 L312.8 30.6 L310.2 33.2 L307.59999999999997 30.6 Z" fill="#686868"/><path d="M310.2 37.0 L312.8 39.6 L310.2 42.2 L307.59999999999997 39.6 Z" fill="#686868"/><path d="M310.2 46.1 L312.8 48.7 L310.2 51.300000000000004 L307.59999999999997 48.7 Z" fill="#686868"/><path d="M319.2 28.0 L321.8 30.6 L319.2 33.2 L316.59999999999997 30.6 Z" fill="#686868"/><path d="M319.2 37.0 L321.8 39.6 L319.2 42.2 L316.59999999999997 39.6 Z" fill="#686868"/><path d="M319.2 46.1 L321.8 48.7 L319.2 51.300000000000004 L316.59999999999997 48.7 Z" fill="#686868"/><path d="M328.3 28.0 L330.90000000000003 30.6 L328.3 33.2 L325.7 30.6 Z" fill="#686868"/><path d="M328.3 37.0 L330.90000000000003 39.6 L328.3 42.2 L325.7 39.6 Z" fill="#686868"/><path d="M328.3 46.1 L330.90000000000003 48.7 L328.3 51.300000000000004 L325.7 48.7 Z" fill="#686868"/>
<rect x="309.5" y="34.4" width="1.4" height="1.4" fill="#a0a0a0"/><rect x="309.5" y="43.45" width="1.4" height="1.4" fill="#a0a0a0"/><rect x="318.5" y="34.4" width="1.4" height="1.4" fill="#a0a0a0"/><rect x="318.5" y="43.45" width="1.4" height="1.4" fill="#a0a0a0"/><rect x="327.6" y="34.4" width="1.4" height="1.4" fill="#a0a0a0"/><rect x="327.6" y="43.45" width="1.4" height="1.4" fill="#a0a0a0"/>
<rect x="314.0" y="29.900000000000002" width="1.4" height="1.4" fill="#a0a0a0"/><rect x="323.05" y="29.900000000000002" width="1.4" height="1.4" fill="#a0a0a0"/><rect x="314.0" y="38.9" width="1.4" height="1.4" fill="#a0a0a0"/><rect x="323.05" y="38.9" width="1.4" height="1.4" fill="#a0a0a0"/><rect x="314.0" y="48.0" width="1.4" height="1.4" fill="#a0a0a0"/><rect x="323.05" y="48.0" width="1.4" height="1.4" fill="#a0a0a0"/>
<path d="M350 36.8 H372.4 M361 25.6 V48" stroke="#383838" stroke-width="1.8"/><rect x="356.4" y="32" width="9.4" height="9.6" fill="#cbb958" stroke="#555548" stroke-width="1.4"/>
<path d="M404.8 26.8 L409.4 31.6 L406.6 31.6 L406.6 36.4 L411.4 36.4 L411.4 33.6 L416.2 38.2 L411.4 42.8 L411.4 40.0 L406.6 40.0 L406.6 44.8 L409.4 44.8 L404.8 49.6 L400.2 44.8 L403.0 44.8 L403.0 40.0 L398.2 40.0 L398.2 42.8 L393.4 38.2 L398.2 33.6 L398.2 36.4 L403.0 36.4 L403.0 31.6 L400.2 31.6 Z" fill="#2c7ce0" stroke="#2464c8" stroke-width="0.8"/><path d="M398.4 38.2 H411.2 M404.8 31.8 V44.6" stroke="#1c4ca0" stroke-width="1.5"/>
<path d="M438.7 39.4 L447.4 48.2" stroke="#787878" stroke-width="5" stroke-linecap="butt"/><path d="M438.7 39.4 L447.4 48.2" stroke="#c8c8c8" stroke-width="2" stroke-linecap="butt"/><circle cx="433.2" cy="33.8" r="7.4" fill="url(#glens)" stroke="#808080" stroke-width="2.2"/>
<path d="M428.2 33.8 H438.2 M433.2 28.8 V38.8" stroke="#484848" stroke-width="2"/>
<path d="M470.4 39.4 L479 48.2" stroke="#787878" stroke-width="5" stroke-linecap="butt"/><path d="M470.4 39.4 L479 48.2" stroke="#c8c8c8" stroke-width="2" stroke-linecap="butt"/><circle cx="464.9" cy="33.8" r="7.4" fill="url(#glens)" stroke="#808080" stroke-width="2.2"/>
<path d="M459.6 33.8 H470.2" stroke="#585858" stroke-width="2.2"/>
<path d="M501.9 39.4 L510.6 48.2" stroke="#787878" stroke-width="5" stroke-linecap="butt"/><path d="M501.9 39.4 L510.6 48.2" stroke="#c8c8c8" stroke-width="2" stroke-linecap="butt"/><circle cx="496.4" cy="33.8" r="7.4" fill="url(#glens)" stroke="#808080" stroke-width="2.2"/>
<rect x="493" y="30.4" width="6.8" height="6.8" fill="#a0a0a0" stroke="#686868" stroke-width="1.4"/>
<rect x="520.4" y="30.8" width="12" height="18" fill="#fff" stroke="#505050" stroke-width="1.6" stroke-dasharray="1.6 1.4"/>
<path d="M536.2 38.0 L542.6 45" stroke="#787878" stroke-width="5" stroke-linecap="butt"/><path d="M536.2 38.0 L542.6 45" stroke="#c8c8c8" stroke-width="2" stroke-linecap="butt"/><circle cx="530.8" cy="32" r="7.6" fill="url(#glens)" stroke="#808080" stroke-width="2.2"/>
<path d="M583 31.4 Q588.4 26.4 593.6 29.8 Q598 34.6 592.4 41.4 L585.6 47.8" fill="none" stroke="#2450c0" stroke-width="3.7" stroke-linecap="butt"/><path d="M585 30 Q589 27.6 592.6 30.4 Q595.6 33.8 593.4 37.6" fill="none" stroke="#2c80e8" stroke-width="2.2"/><path d="M576.6 27.2 V38.6 H587.8 L584 35.4 L586.6 32.4 L581.6 31.6 Z" fill="#80a8d8" stroke="#2448b0" stroke-width="1.5" stroke-linejoin="miter"/>
<g filter="url(#emb)"><path d="M622.4 31.4 Q617 26.4 611.8 29.8 Q607.4 34.6 613 41.4 L619.8 47.8" fill="none" stroke="#a2a2a2" stroke-width="4.6"/><path d="M628.8 26.6 V38.8 H616.6 L621 35.4 L616.8 31.2 L622 30.6 Z" fill="#a2a2a2"/><path d="M615 34.8 L618 31.8" stroke="#e8e8e8" stroke-width="1.6"/></g>
<g filter="url(#emb)"><path d="M654.6 26.4 L666.6 42 M671 26.4 L659 42" stroke="#a2a2a2" stroke-width="4.6"/><circle cx="658.4" cy="44.4" r="2.9" fill="#f0f0f0" stroke="#a2a2a2" stroke-width="3.9"/><circle cx="667.6" cy="44.4" r="2.9" fill="#f0f0f0" stroke="#a2a2a2" stroke-width="3.9"/><circle cx="658.4" cy="44.4" r="1" fill="#f4f4f4"/><circle cx="667.6" cy="44.4" r="1" fill="#f4f4f4"/><path d="M654.6 26.4 L664 38.6 M671 26.4 L661.6 38.6" stroke="#a2a2a2" stroke-width="4.6"/><path d="M667.4 30.6 L670.6 26.4" stroke="#e4e4e4" stroke-width="1.3" stroke-dasharray="1 0.8"/><circle cx="663.4" cy="34" r="0.9" fill="#e8e8e8"/></g>
<path d="M683.6 27.6 H691 L694 30.6 V41.6 H683.6 Z" fill="#f4f6f8" stroke="#484848" stroke-width="1.8" stroke-linejoin="round"/><path d="M691 27.6 V30.6 H694" fill="#fff" stroke="#484848" stroke-width="1.2"/>
<path d="M686 32.6 h4 M686 35.4 h5 M686 38.2 h5" stroke="#98b0c8" stroke-width="1.2"/>
<path d="M692.8 31.8 H701.6 L705 35.2 V45.8 H692.8 Z" fill="#f4f6f8" stroke="#284878" stroke-width="1.8" stroke-linejoin="round"/><path d="M701.6 31.8 V35.2 H705" fill="#fff" stroke="#284878" stroke-width="1.2"/>
<path d="M695.4 37 h4 M695.4 39.8 h7 M695.4 42.6 h7" stroke="#98b0c8" stroke-width="1.4"/>
<g filter="url(#emb)"><path d="M713 28 H719 L721 25.6 H729 L731 28 H733.6 V37 H737 V49.2 H724.6 V46.4 H713 Z" fill="#a2a2a2"/><path d="M722.4 31 L726 27" stroke="#dcdcdc" stroke-width="1.2"/><circle cx="725.6" cy="35.2" r="1" fill="#e0e0e0"/></g>
<g filter="url(#emb)"><path d="M756.8 25.6 H780.4 V34.4 H772.4 V36.8 H776 V41 H780.4 V49.2 H756.8 V41 H761.2 V36.8 H764.8 V34.4 H756.8 Z" fill="#a2a2a2"/></g>
<g filter="url(#emb)"><rect x="788.8" y="26.4" width="22.4" height="7.4" fill="#f8f8f8" stroke="#a2a2a2" stroke-width="1.6"/><path d="M797.4 29 H803.2 V37.4 H808 V41 H812 V49.2 H788 V41 H792.6 V37.4 H797.4 Z" fill="#a2a2a2"/></g>
<g filter="url(#emb)"><rect x="819.6" y="25.6" width="23.8" height="23.6" fill="#a2a2a2"/><rect x="851" y="25.6" width="24" height="23.6" fill="#a2a2a2"/></g>
<path d="M910.7 41.5 L917.4 48" stroke="#787878" stroke-width="5" stroke-linecap="butt"/><path d="M910.7 41.5 L917.4 48" stroke="#c8c8c8" stroke-width="2" stroke-linecap="butt"/><circle cx="904" cy="35" r="8.8" fill="url(#glens)" stroke="#808080" stroke-width="2.2"/>
<path d="M900.6 30 V40.4 L909 35.2 Z" fill="#e0d890" stroke="#a09850" stroke-width="1"/><path d="M896.6 33 h4 M896.6 37.4 h4" stroke="#f4f4f4" stroke-width="1.4"/><path d="M913.6 35 h4.4" stroke="#a09040" stroke-width="1.2"/>
<g filter="url(#emb)"><path d="M932.2 33.4 V49.6 L946 41.4 Z" fill="#a2a2a2"/><path d="M926 37.6 H933 M926 44 H933 M944 41.2 H949.8" stroke="#a2a2a2" stroke-width="1.8"/><path d="M938 31.4 H949.6 M943.8 25.6 V37" stroke="#a2a2a2" stroke-width="3"/></g>
<g filter="url(#emb)"><path d="M960.4 29 H971 L974 26 H979 L981.6 29.4 L978.4 35 L981 37 V46 H960.4 Z" fill="#a2a2a2"/><path d="M962.6 26.6 V49.4" stroke="#a2a2a2" stroke-width="1.4"/><path d="M965.4 26.6 V49.4" stroke="#a2a2a2" stroke-width="1.4"/><path d="M968.2 26.6 V49.4" stroke="#a2a2a2" stroke-width="1.4"/><path d="M971 26.6 V49.4" stroke="#a2a2a2" stroke-width="1.4"/><path d="M973.8 26.6 V49.4" stroke="#a2a2a2" stroke-width="1.4"/><path d="M976.6 26.6 V49.4" stroke="#a2a2a2" stroke-width="1.4"/><path d="M957.4 31.6 H982" stroke="#a2a2a2" stroke-width="1.4"/><path d="M957.4 34.6 H982" stroke="#a2a2a2" stroke-width="1.4"/><path d="M957.4 37.6 H982" stroke="#a2a2a2" stroke-width="1.4"/><path d="M957.4 40.6 H982" stroke="#a2a2a2" stroke-width="1.4"/><path d="M957.4 43.6 H982" stroke="#a2a2a2" stroke-width="1.4"/></g>
<g filter="url(#emb)"><path d="M990.4 47.6 L1004 32.6" stroke="#a2a2a2" stroke-width="4.6" stroke-linecap="round"/><path d="M999.6 27.6 L1002.4 25.4 L1007.6 29.4 L1010.4 30.4 L1013.2 35 L1009.6 38.6 L1006.4 34.6 L1003.6 34.4 Z" fill="#a2a2a2"/></g>
<path d="M1055.6 29 H1063.4 Q1066.6 29.2 1066.6 32.6 Q1066.6 36.4 1063.2 36.6 H1058.4 Q1056.4 36.8 1056.4 39 V44 Q1056.6 46 1058.8 46 H1061" fill="none" stroke="#1858e0" stroke-width="2.2"/><path d="M1055.6 32.4 H1058.6 Q1060.8 32.6 1060.8 35 V38.4 Q1060.6 40.8 1058 41 H1054 Q1051.2 41.2 1051.2 44.4 Q1051.2 48.8 1054.4 49 H1060.4" fill="none" stroke="#e04020" stroke-width="2.2"/><rect x="1046.2" y="27.6" width="9.6" height="6.4" fill="#4c8444" stroke="#386030" stroke-width="1"/><path d="M1048 32.4 L1050 29.2 H1053" stroke="#d0c848" stroke-width="1.6" fill="none"/><rect x="1060.2" y="44.2" width="9.6" height="6.2" fill="#4c8444" stroke="#386030" stroke-width="1"/><path d="M1062 49 L1064 45.8 H1067" stroke="#d0c848" stroke-width="1.6" fill="none"/>
<defs><linearGradient id="gbar" x1="0" y1="0" x2="1" y2="0"><stop offset="0" stop-color="#7c868e"/><stop offset="0.45" stop-color="#f4f8fc"/><stop offset="1" stop-color="#8ea0b4"/></linearGradient></defs>
<path d="M1092.3999999999999 27.6 H1097.3999999999999 L1098.3999999999999 32.6 L1100.0 38 V46 H1089.8 V38 L1091.3999999999999 32.6 Z" fill="#8c949c" stroke="#4c4c4c" stroke-width="1.3"/><rect x="1092.2" y="29.4" width="5.4" height="2.4" fill="#d8dce0"/><rect x="1091.6" y="32.6" width="6.6" height="1.6" fill="#484848"/><rect x="1090.6" y="38.4" width="8.6" height="7" fill="url(#gbar)"/><path d="M1104.0 27.6 H1109.0 L1110.0 32.6 L1111.6000000000001 38 V46 H1101.4 V38 L1103.0 32.6 Z" fill="#8c949c" stroke="#4c4c4c" stroke-width="1.3"/><rect x="1103.8000000000002" y="29.4" width="5.4" height="2.4" fill="#d8dce0"/><rect x="1103.2" y="32.6" width="6.6" height="1.6" fill="#484848"/><rect x="1102.2" y="38.4" width="8.6" height="7" fill="url(#gbar)"/><rect x="1098.4" y="33.6" width="4.6" height="4.4" fill="#404040"/>
<path d="M1119.4 28 H1128.6 M1119.4 31 H1128.6" stroke="#505050" stroke-width="1.6"/><path d="M1122.6 46 L1134.4 34.6" stroke="#686868" stroke-width="4.4" stroke-linecap="round"/><path d="M1123 45.6 L1134 35" stroke="#c0c4cc" stroke-width="1.6" stroke-linecap="round"/><path d="M1140.6 30.6 Q1141 35.6 1136.4 36 Q1132.6 35.4 1133 30.6 Q1133.6 27.2 1137 26.4 L1135.8 30.4 L1138 32.2 Z" fill="#f0f0f0" stroke="#585858" stroke-width="1.6"/><path d="M1136.4 49.2 L1139.8 40 L1143.2 49.2 M1137.6 46 H1142" fill="none" stroke="#404040" stroke-width="1.6"/>
<path d="M1165.2 26 H1178.9 L1183.4 30.5 V48.8 H1165.2 Z" fill="#f0f2f4" stroke="#585858" stroke-width="1.8" stroke-linejoin="round"/><path d="M1178.9 26 V30.5 H1183.4" fill="#fff" stroke="#585858" stroke-width="1.2"/>
<path d="M1168 29 H1178 V32 H1181 V46.4 H1168 Z" fill="#404440"/><path d="M1168.6 32 H1176 M1168.6 36 H1180.6 M1168.6 40 H1180.6 M1174 44 H1180.6" stroke="#389038" stroke-width="1.2"/><path d="M1174.6 33.4 L1178 37 L1174.6 43 L1171.2 37 Z" fill="#a8d0f0" stroke="#5090d0" stroke-width="1"/>
<path d="M1196.6 27.8 H1209.3999999999999 L1213.6 32.0 V48.8 H1196.6 Z" fill="url(#gdoc)" stroke="#686868" stroke-width="1.8" stroke-linejoin="round"/><path d="M1209.3999999999999 27.8 V32.0 H1213.6" fill="#fff" stroke="#686868" stroke-width="1.2"/>
<path d="M1199.6 40.4 H1210.4 M1205 35 V45.8" stroke="#189018" stroke-width="3"/>
<rect x="1230" y="28" width="15.6" height="18.6" fill="#d0d0d0" stroke="#888" stroke-width="1.6"/><rect x="1233" y="31" width="9.6" height="12.6" fill="#b8b8b8"/><path d="M1226.8 26.4 L1249 48.6 M1249 26.4 L1226.8 48.6" stroke="#e04828" stroke-width="2.8" stroke-linecap="round"/>
<g filter="url(#emb)"><path d="M1262 25.6 H1274.4 V32.4 H1262 Z M1257.6 42.6 H1265 V49.2 H1257.6 Z M1271 42.6 H1278.6 V49.2 H1271 Z" fill="#a2a2a2"/><path d="M1265.4 31 L1261.2 43 M1271 31 L1274.8 43" stroke="#a2a2a2" stroke-width="2.6"/><path d="M1274 29 H1279 Q1281.4 30 1281 34 V39" fill="none" stroke="#a2a2a2" stroke-width="1.8"/><path d="M1277.4 37.4 H1284 L1280.8 41.6 Z" fill="#a2a2a2"/></g>
<path d="M1303.2 27.8 H1315.6 L1319.8 32.0 V48.8 H1303.2 Z" fill="url(#gdoc)" stroke="#686868" stroke-width="1.8" stroke-linejoin="round"/><path d="M1315.6 27.8 V32.0 H1319.8" fill="#fff" stroke="#686868" stroke-width="1.2"/>
<text x="1305.6" y="46" font-size="17" font-weight="bold" fill="#8c8458" textLength="9.4" lengthAdjust="spacingAndGlyphs">$</text>
<path d="M1334.6 27.8 H1347.2 L1351.4 32.0 V48.8 H1334.6 Z" fill="url(#gdoc)" stroke="#686868" stroke-width="1.8" stroke-linejoin="round"/><path d="M1347.2 27.8 V32.0 H1351.4" fill="#fff" stroke="#686868" stroke-width="1.2"/>
<path d="M1347 32 L1338.4 40.4 L1344.4 39.6 L1338.6 46.6 L1347.4 38 L1341.6 38.6 Z" fill="#2070e0" stroke="#1860d0" stroke-width="0.8"/>
<rect x="1376" y="25.6" width="24" height="23.8" fill="#e04c2c"/><path d="M1400 44 V49.4 H1386 Z" fill="#b03020"/><path d="M1378.4 43.4 V30.4 Q1378.6 28.4 1380.6 28.4 Q1382.6 28.4 1382.8 30.4 V42 M1378.4 36.4 H1382.8 M1385 42 V28.6 H1387 Q1389.2 29 1389 32 Q1389 34.6 1385.4 35 L1389.4 42 M1394.6 28.6 H1391.4 V42 H1394.8 M1391.4 35 H1394 M1399.2 29.4 Q1396.2 28 1396.2 31.6 Q1396.6 34.6 1398 35.6 Q1399.6 37 1399 40 Q1398.4 42.6 1396 41.6" fill="none" stroke="#fff4e0" stroke-width="1.5"/><path d="M1377.6 43.6 V45.4 H1399" fill="none" stroke="#fff4e0" stroke-width="1.3"/>
<defs><filter id="emb" x="-10%" y="-10%" width="130%" height="130%"><feOffset in="SourceAlpha" dx="1" dy="1" result="o"/><feFlood flood-color="#ffffff"/><feComposite in2="o" operator="in" result="w"/><feMerge><feMergeNode in="w"/><feMergeNode in="SourceGraphic"/></feMerge></filter></defs>
<path d="M2.2 76.6 V94.6 L6.4 91 L9.6 99.4 L13.6 97.8 L10.4 89.6 L15.6 89.2 Z" fill="#2c2c24"/>
<path d="M0 117.8 H4.4 M0 126.6 H4.4 M14.4 122.2 H19.6" stroke="#807840" stroke-width="1.4"/><path d="M4.4 112.8 V131.6 L14.6 122.2 Z" fill="#bcb470" stroke="#605830" stroke-width="1.2"/><path d="M5.8 115.4 L8.2 117.6 L5.8 119.6 Z" fill="#f0ecc0"/>
<path d="M0 153.6 H18.6 M7.2 143 V165" stroke="#303030" stroke-width="1.6"/><rect x="2.6" y="149" width="9.2" height="9.2" fill="#2868d8" stroke="#707070" stroke-width="1.4"/>
<rect x="-4" y="178.8" width="23.8" height="15.6" fill="none" stroke="#505050" stroke-width="1.4" stroke-dasharray="1.5 1.5"/><text x="-5.4" y="191.8" font-size="15" fill="#2050b8" textLength="23" lengthAdjust="spacingAndGlyphs">LBL</text>
<path d="M0 209 H4" stroke="#606060" stroke-width="1.5" stroke-dasharray="2.4 0.6"/>
<path d="M6 209 H10" stroke="#606060" stroke-width="1.5" stroke-dasharray="2.4 0.6"/>
<path d="M12 209 H17" stroke="#606060" stroke-width="1.5" stroke-dasharray="2.4 0.6"/>
<path d="M0 212.4 H17" stroke="#606060" stroke-width="1.5" stroke-dasharray="2.4 0.6"/>
<path d="M1 218.2 H8" stroke="#606060" stroke-width="1.5" stroke-dasharray="2.4 0.6"/>
<path d="M10 218.2 H17" stroke="#606060" stroke-width="1.5" stroke-dasharray="2.4 0.6"/>
<path d="M0 221.2 H5" stroke="#606060" stroke-width="1.5" stroke-dasharray="2.4 0.6"/>
<path d="M7 221.2 H17" stroke="#606060" stroke-width="1.5" stroke-dasharray="2.4 0.6"/>
<path d="M1 224.6 H4" stroke="#606060" stroke-width="1.5" stroke-dasharray="2.4 0.6"/>
<path d="M6 224.6 H17" stroke="#606060" stroke-width="1.5" stroke-dasharray="2.4 0.6"/>
<path d="M0 230.4 H6" stroke="#606060" stroke-width="1.5" stroke-dasharray="2.4 0.6"/>
<path d="M8 230.4 H17" stroke="#606060" stroke-width="1.5" stroke-dasharray="2.4 0.6"/>
<path d="M1 243 V252 M10.2 243 V252 M5.6 254 V262.4 M14.8 254 V262.4" stroke="#2860c8" stroke-width="1.8"/><rect x="0" y="250.6" width="18.6" height="4.6" fill="#2878e8"/><rect x="11" y="250.6" width="7.6" height="4.6" fill="#2858b8"/>
<path d="M0 280.2 H2 M0 293.4 H2 M13.6 280.2 H19.6 M13.6 293.4 H19.6" stroke="#706838" stroke-width="1.4"/><rect x="2.4" y="275.6" width="11.2" height="22.2" fill="#bcb46c" stroke="#686040" stroke-width="1.4"/><path d="M3.6 277 H9 L3.6 282.4 Z" fill="#f0e8c0"/>
<path d="M1.6 315.8 H15.4 L18.4 319 L15.4 322.2 H1.6 Z" fill="#bcb46c" stroke="#787048" stroke-width="1.3"/><path d="M2.6 316.8 H5.4 L2.6 319.4 Z" fill="#f4f0d0"/><rect x="-2" y="327.6" width="17.2" height="6.8" fill="#bcb46c" stroke="#787048" stroke-width="1.3"/><path d="M0.6 328.6 H3 L0.6 331 Z" fill="#f4f0d0"/>
<path d="M2.6 348.4 V367.4 M5.6 348.8 L14.4 358 L5.6 367" fill="none" stroke="#585858" stroke-width="1.8"/><path d="M15.6 358 H20" stroke="#3890a0" stroke-width="1.6"/><path d="M0 355 V356.6 M0 359.6 V361" stroke="#7090d0" stroke-width="1.2"/>
<path d="M0.4 380 V400 M0 400 H19.6" stroke="#404040" stroke-width="1.6"/><path d="M2.4 400 V402.6" stroke="#404040" stroke-width="1.1"/><path d="M5.2 400 V402.6" stroke="#404040" stroke-width="1.1"/><path d="M8 400 V402.6" stroke="#404040" stroke-width="1.1"/><path d="M10.8 400 V402.6" stroke="#404040" stroke-width="1.1"/><path d="M13.6 400 V402.6" stroke="#404040" stroke-width="1.1"/><path d="M16.4 400 V402.6" stroke="#404040" stroke-width="1.1"/><path d="M19 400 V402.6" stroke="#404040" stroke-width="1.1"/><path d="M2.4 388 Q5 381 8 385 Q11.4 393 14.6 388 Q16.8 382 19.6 383.4" fill="none" stroke="#2068e0" stroke-width="1.7"/><path d="M2.4 394 L6 397.6 L10 393.8 L14.2 397.6 L19.6 393.6" fill="none" stroke="#d84828" stroke-width="1.5"/>
<rect x="-3" y="416.4" width="22.4" height="13" rx="1.5" fill="#b4b4b4" stroke="#484848" stroke-width="1.6"/><path d="M1 424.4 Q1.2 421 3.6 421.2 Q5.2 421.6 4.8 424 H1 V426 H15 V424 M15 424 Q15.2 421 13 421.2 Q11 421.6 11.6 424 H15" fill="none" stroke="#505050" stroke-width="1.2"/>
<circle cx="8.6" cy="457.6" r="10.8" fill="#b8b8b8" stroke="#7c7c7c" stroke-width="1.6"/><path d="M0.4 459.6 Q3.4 464.6 6.6 460.6 Q8.6 457.6 10 454.6 Q13 450.6 16 456.4" fill="none" stroke="#1c60e0" stroke-width="2.2"/>
<path d="M10.6 488.4 L14.4 484.2 Q17 482.4 17.8 486 Q18 490.6 20 491.6" fill="none" stroke="#404040" stroke-width="1.3"/><path d="M0 495.4 L9.4 488 L11 490.4 L1.6 498.4 L-1 498.4 Z" fill="#d8c888" stroke="#585848" stroke-width="1.3"/>
<path d="M10.6 521.0 L14.4 516.8 Q17 515.0 17.8 518.6 Q18 523.2 20 524.2" fill="none" stroke="#404040" stroke-width="1.3"/><path d="M0 528.0 L9.4 520.6 L11 523.0 L1.6 531.0 L-1 531.0 Z" fill="#d8c888" stroke="#585848" stroke-width="1.3"/>
<path d="M0.4 479.6 L1.6 484.6 L3.2 479.2" fill="none" stroke="#2858c8" stroke-width="1.5"/><path d="M0.2 512.6 V514.2 M0.2 517.6 V519.6" stroke="#4878d8" stroke-width="1.4"/>
<rect x="-2" y="546.8" width="21.4" height="10.6" fill="#f4f4f4" stroke="#484848" stroke-width="1.6"/><path d="M0 556 Q8.6 541 18.6 556" fill="none" stroke="#2868d0" stroke-width="1.5"/><path d="M6.4 557 L12 550.4" stroke="#d84828" stroke-width="1.5"/><rect x="1.6" y="558.2" width="12.8" height="9" fill="#d0d0d0" stroke="#505050" stroke-width="1.4"/><path d="M3.6 561.6 H9 M3.6 564.6 H9" stroke="#909090" stroke-width="1"/><rect x="10" y="562" width="2.8" height="2" fill="#e8c020"/><rect x="11.4" y="562" width="1.6" height="2" fill="#d83020"/>
<path d="M-1 604.8 L19.4 584.2" stroke="#3c3c3c" stroke-width="2.2"/>
<rect x="-2" y="618.8" width="20" height="20" fill="url(#gteal)" stroke="#505050" stroke-width="1.6"/><path d="M16 631.6 V636.6 H11 Z" fill="#5a8c90"/>
<circle cx="8.6" cy="661.4" r="10.6" fill="url(#gteal)" stroke="#585858" stroke-width="1.5"/>
<path d="M-1 686 Q15 685 16.6 703.6" fill="none" stroke="#181818" stroke-width="1.5"/><path d="M0 703.8 H16.6" stroke="#2060d8" stroke-width="1.5" stroke-dasharray="1.6 1.4"/>
<ellipse cx="14" cy="727.6" rx="6" ry="8.8" fill="#6c9ca4" stroke="#4c6468" stroke-width="1.4"/><ellipse cx="3.8" cy="727.4" rx="6.8" ry="9.6" fill="url(#gteal)" stroke="#4c6468" stroke-width="1.4"/><path d="M9.4 723.6 Q10.6 727.4 9.4 731.4" stroke="#6c9ca4" stroke-width="2.4" fill="none"/>
<text x="-2.2" y="771.2" font-size="32.5" font-weight="bold" font-family="Liberation Serif, serif" fill="#282828" textLength="21" lengthAdjust="spacingAndGlyphs">A</text>
<rect x="-2" y="784" width="20.4" height="19.8" fill="#70a0a8" stroke="#101010" stroke-width="1.6"/><path d="M15 788.6 H3.4 Q1.4 788.8 1.4 791 Q1.4 793.6 3.4 793.8 H12.4 Q14.8 794 14.8 796.6 Q14.8 799.2 12.4 799.4 H0.6" fill="none" stroke="#101010" stroke-width="2.4"/>
<path d="M0 826 H18.4 M7 815 V837" stroke="#383838" stroke-width="1.5"/><rect x="2.4" y="821.2" width="9.4" height="9.4" fill="#6c98a4" stroke="#686868" stroke-width="1.3"/>
<path d="M59.2 92.4 A8.8 8.8 0 1 1 56.4 81" fill="none" stroke="#2c54a8" stroke-width="3.4"/><path d="M62.4 78.8 V87.8 H53.4 Z" fill="#2c54a8"/>
<path d="M43.6 125.6 A8.8 8.8 0 1 0 46.4 114.2" fill="none" stroke="#2c54a8" stroke-width="3.4"/><path d="M40.8 111.6 V120.6 H49.8 Z" fill="#2c54a8"/>
<path d="M39.6 193 L47.6 186 V190.8 H52 V195.2 H47.6 V200 Z" fill="#6c7ccc"/><path d="M64 193 L56 186 V190.8 H51.6 V195.2 H56 V200 Z" fill="#2848a8"/>
<path d="M50.7 214.6 L57.8 222.6 H53 V226.8 H48.4 V222.6 H43.6 Z" fill="#2848a8"/><path d="M50.7 238.4 L57.8 230.4 H53 V226.4 H48.4 V230.4 H43.6 Z" fill="#6c7ccc"/>
<defs><filter id="cglow" x="-50%" y="-50%" width="200%" height="200%"><feGaussianBlur stdDeviation="1.6"/></filter></defs><path d="M236 863.4 V892.6 L243 886.4 L246.2 893 Q248 895.2 250.4 893.8 Q252.2 892.4 251.2 890.2 L250 885.4 L256 884.4 Z" fill="#b4d4ee" stroke="#b4d4ee" stroke-width="5" opacity="0.75" filter="url(#cglow)"/><path d="M236 863.4 V892.6 L243 886.4 L246.2 893 Q248 895.2 250.4 893.8 Q252.2 892.4 251.2 890.2 L250 885.4 L256 884.4 Z" fill="#e6f3f5" stroke="#625ad0" stroke-width="1.9" stroke-linejoin="miter"/>
</svg>
</body></html>
